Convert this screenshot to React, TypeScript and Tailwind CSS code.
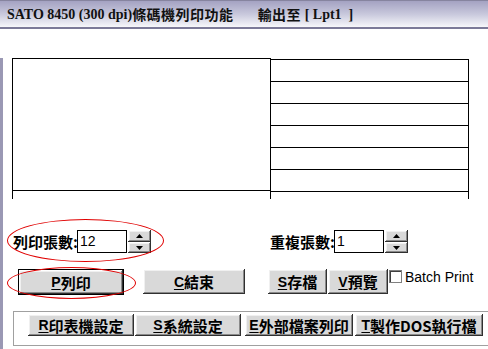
const cjk = { fontFamily: '"Noto Sans CJK TC", "Liberation Sans", sans-serif' };

const btn3d =
	'bg-[#d9d9d9] shadow-[inset_-1px_-1px_#303030,inset_1px_1px_#ffffff,inset_-2px_-2px_#8a8a8a,inset_2px_2px_#f0f0f0] flex items-center justify-center font-bold text-[15px] text-black leading-none whitespace-nowrap';

function Btn({ hot, label, className }: { hot: string; label: string; className: string }) {
	return (
		<div className={btn3d + ' ' + className} style={cjk}>
			<span className="underline underline-offset-2 font-['Liberation_Sans'] text-[14px]">{hot}</span>
			<span>{label}</span>
		</div>
	);
}

function Spinner() {
	return (
		<div className="flex flex-col w-[23px] h-[23px]">
			<div className={btn3d + ' h-[12px]'}>
				<svg width="7" height="4" viewBox="0 0 7 4">
					<path d="M3.5 0 L7 4 L0 4 Z" fill="#000" />
				</svg>
			</div>
			<div className={btn3d + ' h-[11px]'}>
				<svg width="7" height="4" viewBox="0 0 7 4">
					<path d="M0 0 L7 0 L3.5 4 Z" fill="#000" />
				</svg>
			</div>
		</div>
	);
}

function NumField({ label, value }: { label: string; value: string }) {
	return (
		<div className="flex items-center h-[23px]">
			<span className="w-[64px] shrink-0 whitespace-nowrap font-bold text-[15px] leading-none text-black" style={cjk}>
				{label}
			</span>
			<div className="w-[50px] h-[23px] border border-black bg-white flex items-center pl-[2px] font-['Liberation_Sans'] text-[14px]">
				{value}
			</div>
			<div className="ml-px">
				<Spinner />
			</div>
		</div>
	);
}

export default function App() {
	return (
		<div className="w-[488px] h-[349px] bg-white relative overflow-hidden">
			{/* title bar */}
			<div className="h-[29px] border-t border-[#86849f] border-b-2 border-b-[#7c7a98] bg-gradient-to-b from-[#a4a2c2] via-[#c8c8dc] to-[#f7f7fa] flex items-center pl-[7px] text-[#111] whitespace-nowrap">
				<span className="font-['Liberation_Serif'] font-bold text-[14px]">SATO 8450 (300 dpi)</span>
				<span className="font-bold text-[14px] tracking-[0.5px] leading-none" style={cjk}>
					條碼機列印功能
				</span>
				<span className="ml-[24px] font-bold text-[14px] tracking-[0.5px] leading-none" style={cjk}>
					輸出至
				</span>
				<span className="font-['Liberation_Serif'] font-bold text-[14px] whitespace-pre"> [ Lpt1  ]</span>
			</div>

			{/* body */}
			<div className="h-[320px] border-l-[3px] border-[#9a98b4]">
				{/* grid area */}
				<div className="ml-[9px] mt-[29px] w-[457px] h-[141px] overflow-hidden flex">
					<div className="w-[259px] shrink-0">
						<div className="h-[132px] border-t border-x border-black" />
						<div className="h-[40px] border-t border-x border-black" />
					</div>
					<div className="w-[199px] -ml-px mt-px">
						{[0, 1, 2, 3, 4, 5, 6].map((i) => (
							<div key={i} className="h-[22px] border-t border-x border-black" />
						))}
					</div>
				</div>

				{/* counts */}
				<div className="mt-[31px] ml-[10px] flex">
					<NumField label="列印張數:" value="12" />
					<div className="ml-[119px]">
						<NumField label="重複張數:" value="1" />
					</div>
				</div>

				{/* action row */}
				<div className="mt-[16px] flex items-start">
					<div className="ml-[15px] border border-black">
						<Btn hot="P" label="列印" className="w-[104px] h-[24px]" />
					</div>
					<Btn hot="C" label="結束" className="ml-[19px] w-[102px] h-[25px]" />
					<Btn hot="S" label="存檔" className="ml-[23px] w-[59px] h-[25px]" />
					<Btn hot="V" label="預覽" className="ml-px w-[60px] h-[25px]" />
					<div className="ml-px mt-px w-[13px] h-[13px] border border-[#808080] bg-white shadow-[inset_1px_1px_#404040]" />
					<span className="ml-[3px] font-['Liberation_Sans'] text-[14px] leading-none pt-[1px] text-black">
						Batch Print
					</span>
				</div>

				{/* bottom group */}
				<div className="mt-[16px] ml-[10px] w-[490px] h-[35px] border border-[#a0a0a0] shadow-[inset_1px_1px_#ffffff] pt-[2px] pl-[14px] flex items-start">
					<Btn hot="R" label="印表機設定" className="w-[106px] h-[22px]" />
					<Btn hot="S" label="系統設定" className="ml-[1px] w-[106px] h-[22px]" />
					<Btn hot="E" label="外部檔案列印" className="ml-[4px] w-[108px] h-[22px]" />
					<Btn hot="T" label="製作DOS執行檔" className="ml-[2px] w-[128px] h-[22px]" />
				</div>
			</div>

			{/* red annotation rings */}
			<div className="absolute left-[7px] top-[219px] w-[157px] h-[43px] rounded-[50%] border border-[#e00000]" />
			<div className="absolute left-[7px] top-[267px] w-[129px] h-[32px] rounded-[50%] border border-[#e00000]" />
		</div>
	);
}
